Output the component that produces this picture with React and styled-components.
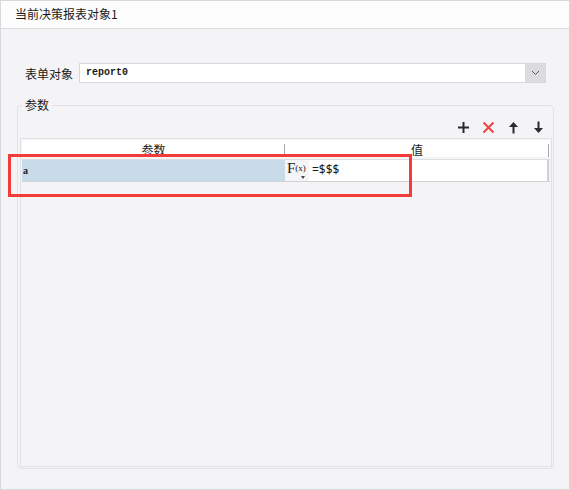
import React from 'react';
import styled, { createGlobalStyle } from 'styled-components';

const GlobalStyle = createGlobalStyle`
  body {
    margin: 0;
    font-family: 'Noto Sans CJK SC', 'Noto Sans', sans-serif;
    color: #1a1a1a;
  }
  * { box-sizing: border-box; }
`;

const Frame = styled.div`
  position: relative;
  width: 570px;
  height: 490px;
  border: 1px solid #d8d8dc;
  background: #f4f4f6;
  display: flex;
  flex-direction: column;
`;

const TitleBar = styled.div`
  height: 28px;
  flex: none;
  background: #fdfdfd;
  border-bottom: 1px solid #dadade;
  padding-left: 14px;
  font-size: 12px;
  line-height: 26px;
`;

const Body = styled.div`
  flex: 1;
  display: flex;
  flex-direction: column;
  padding: 34px 15px 20px 16px;
`;

const FormRow = styled.div`
  display: flex;
  align-items: center;
  padding-left: 8px;
  gap: 6px;
  font-size: 12px;
`;

const Combo = styled.div`
  width: 467px;
  height: 20px;
  display: flex;
  border: 1px solid #d8d8dc;
  background: #fff;
`;

const ComboText = styled.div`
  flex: 1;
  padding-left: 6px;
  font-family: 'Liberation Mono', monospace;
  font-size: 10px;
  font-weight: 600;
  line-height: 18px;
`;

const ComboButton = styled.div`
  width: 20px;
  background: #dcdce0;
  display: flex;
  align-items: center;
  justify-content: center;
`;

const Group = styled.fieldset`
  flex: 1;
  margin: 15px 0 0 0;
  padding: 0 1px 1px 2px;
  border: 1px solid #e2e2e6;
  border-radius: 4px;
  display: flex;
  flex-direction: column;
  min-width: 0;
`;

const Legend = styled.legend`
  font-size: 12px;
  padding: 0 3px;
  margin-left: 2px;
  line-height: 14px;
`;

const Toolbar = styled.div`
  display: flex;
  justify-content: flex-end;
  gap: 12px;
  padding: 9px 7px 4px 0;
  height: 26px;
  align-items: flex-start;
`;

const Pane = styled.div`
  flex: 1;
  border: 1px solid #e2e2e6;
  padding: 1px;
`;

const Header = styled.div`
  display: grid;
  grid-template-columns: 263px 264px;
  height: 17px;
  background: #fff;
  font-size: 12px;
`;

const HeadCell = styled.div`
  position: relative;
  text-align: center;
  height: 17px;
  line-height: 20px;
  &::after {
    content: '';
    position: absolute;
    right: 0;
    top: 4px;
    bottom: 0;
    border-right: 1px solid #a8a8ac;
  }
`;

const Row = styled.div`
  display: flex;
  height: 23px;
  margin-top: 2px;
  border-top: 1px solid #dedee2;
  border-bottom: 1px solid #d2d2d6;
`;

const NameCell = styled.div`
  width: 263px;
  background: #c8dbe8;
  padding-left: 1px;
  font-family: 'Liberation Serif', serif;
  font-weight: 700;
  font-size: 10px;
  line-height: 21px;
`;

const FxButton = styled.div`
  position: relative;
  width: 23px;
  margin-left: 1px;
  background: #f5f5f7;
  font-family: 'Liberation Serif', serif;
  font-size: 15px;
  line-height: 16px;
  padding-left: 1px;
  span { font-size: 9px; vertical-align: 2px; }
  &::after {
    content: '';
    position: absolute;
    right: 4px;
    bottom: 2px;
    border-left: 2px solid transparent;
    border-right: 2px solid transparent;
    border-top: 3px solid #444;
  }
`;

const ValueInput = styled.div`
  flex: 1;
  margin-right: 1px;
  background: #fff;
  border-right: 2px solid #d0d0d4;
  font-size: 12px;
  line-height: 20px;
  padding-left: 3px;
  font-family: 'Noto Sans', sans-serif;
`;

const Annotation = styled.div`
  position: absolute;
  left: 7px;
  top: 153px;
  width: 404px;
  height: 43px;
  border: 3px solid #f53a3a;
`;

const Icon = ({ children }) => (
  <svg width="13" height="13" viewBox="0 0 13 13">{children}</svg>
);

export default function App() {
  return (
    <>
      <GlobalStyle />
      <Frame>
        <TitleBar>当前决策报表对象1</TitleBar>
        <Body>
          <FormRow>
            <span>表单对象</span>
            <Combo>
              <ComboText>report0</ComboText>
              <ComboButton>
                <svg width="9" height="6" viewBox="0 0 9 6">
                  <path d="M1 1l3.5 3.5L8 1" fill="none" stroke="#555" strokeWidth="1" />
                </svg>
              </ComboButton>
            </Combo>
          </FormRow>
          <Group>
            <Legend>参数</Legend>
            <Toolbar>
              <Icon>
                <path d="M6.5 1v11M1 6.5h11" stroke="#2b2b2b" strokeWidth="2" />
              </Icon>
              <Icon>
                <path d="M1.5 1.5l10 10M11.5 1.5l-10 10" stroke="#f04343" strokeWidth="2" />
              </Icon>
              <Icon>
                <path d="M6.5 4v8.5" stroke="#2b2b2b" strokeWidth="2" />
                <path d="M2 6L6.5 1 11 6z" fill="#2b2b2b" />
              </Icon>
              <Icon>
                <path d="M6.5 0.5v8" stroke="#2b2b2b" strokeWidth="2" />
                <path d="M2 7L6.5 12 11 7z" fill="#2b2b2b" />
              </Icon>
            </Toolbar>
            <Pane>
              <Header>
                <HeadCell>参数</HeadCell>
                <HeadCell>值</HeadCell>
              </Header>
              <Row>
                <NameCell>a</NameCell>
                <FxButton>F<span>(x)</span></FxButton>
                <ValueInput>=$$$</ValueInput>
              </Row>
            </Pane>
          </Group>
        </Body>
        <Annotation />
      </Frame>
    </>
  );
}
